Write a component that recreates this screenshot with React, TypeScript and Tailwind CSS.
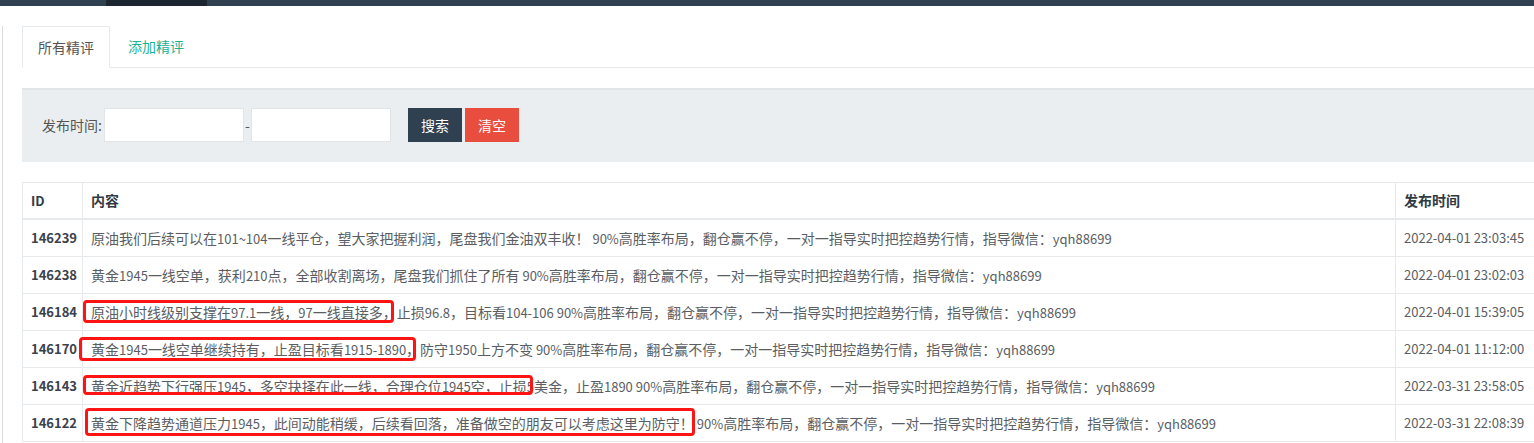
import React from 'react';

type Row = {
  id: string;
  mark?: string;
  rest: string;
  time: string;
  box?: string;
};

const rows: Row[] = [
  {
    id: '146239',
    rest: '原油我们后续可以在101~104一线平仓，望大家把握利润，尾盘我们金油双丰收！ 90%高胜率布局，翻仓赢不停，一对一指导实时把控趋势行情，指导微信：yqh88699',
    time: '2022-04-01 23:03:45',
  },
  {
    id: '146238',
    rest: '黄金1945一线空单，获利210点，全部收割离场，尾盘我们抓住了所有 90%高胜率布局，翻仓赢不停，一对一指导实时把控趋势行情，指导微信：yqh88699',
    time: '2022-04-01 23:02:03',
  },
  {
    id: '146184',
    mark: '原油小时线级别支撑在97.1一线，97一线直接多，',
    rest: '止损96.8，目标看104-106 90%高胜率布局，翻仓赢不停，一对一指导实时把控趋势行情，指导微信：yqh88699',
    time: '2022-04-01 15:39:05',
    box: '-left-[8px] right-[3px] -top-[2px] -bottom-[1px]',
  },
  {
    id: '146170',
    mark: '黄金1945一线空单继续持有，止盈目标看1915-1890，',
    rest: '防守1950上方不变 90%高胜率布局，翻仓赢不停，一对一指导实时把控趋势行情，指导微信：yqh88699',
    time: '2022-04-01 11:12:00',
    box: '-left-[12px] right-[4px] -top-[2px] -bottom-[2px]',
  },
  {
    id: '146143',
    mark: '黄金近趋势下行强压1945，多空抉择在此一线，合理仓位1945空，止损',
    rest: '5美金，止盈1890 90%高胜率布局，翻仓赢不停，一对一指导实时把控趋势行情，指导微信：yqh88699',
    time: '2022-03-31 23:58:05',
    box: '-left-[8px] -right-[6px] -top-[1px] bottom-[1px]',
  },
  {
    id: '146122',
    mark: '黄金下降趋势通道压力1945，此间动能稍缓，后续看回落，准备做空的朋友可以考虑这里为防守！',
    rest: ' 90%高胜率布局，翻仓赢不停，一对一指导实时把控趋势行情，指导微信：yqh88699',
    time: '2022-03-31 22:08:39',
    box: '-left-[6px] -right-[1px] -top-[5px] -bottom-[3px]',
  },
];

const font = { fontFamily: '"Noto Sans CJK SC", "Noto Sans", sans-serif' };

// latin runs are set a size smaller, CJK stays at 14px
const Mixed = ({ text }: { text: string }) => (
  <>
    {text.split(/([\x20-\x7e]+)/).map((part, i) =>
      /^[\x20-\x7e]+$/.test(part) ? (
        <span key={i} className="text-[13px] leading-none">
          {part}
        </span>
      ) : (
        part
      )
    )}
  </>
);

const App = () => {
  return (
    <div className="w-[1534px] h-[443px] overflow-hidden bg-white text-[14px] text-[#5a5e63]" style={font}>
      {/* top nav strip */}
      <div className="flex h-[6px] bg-[#2f4050]">
        <div className="w-[106px]" />
        <div className="w-[101px] bg-[#1c2631]" />
      </div>

      <div className="ml-[2px] border-l border-[#dcdcdc] pl-[19px] h-full">
        {/* tabs */}
        <div className="mt-[20px] flex w-[1600px] border-b border-[#e7eaec]">
          <div className="-mb-px border border-[#e7eaec] border-b-white bg-white px-[15px] py-[10px] leading-5 text-[#555]">
            所有精评
          </div>
          <div className="px-[18px] py-[10px] leading-5 text-[#1ab394]">添加精评</div>
        </div>

        {/* search panel */}
        <div className="mt-[20px] flex w-[1600px] items-center border-t-2 border-[#e2e5e7] bg-[#ebeef0] pl-[20px] pt-[18px] pb-[20px]">
          <span className="mr-[2px] text-[#555]">发布时间:</span>
          <input className="h-[34px] w-[140px] border border-[#e1e5e8] bg-white outline-none" />
          <span className="w-[7px] text-center text-[#555]">-</span>
          <input className="h-[34px] w-[140px] border border-[#e1e5e8] bg-white outline-none" />
          <button className="ml-[17px] h-[34px] w-[54px] bg-[#2f4050] text-white">搜索</button>
          <button className="ml-[3px] h-[34px] w-[54px] bg-[#e84d3d] text-white">清空</button>
        </div>

        {/* table */}
        <table className="mt-[20px] w-[1560px] table-fixed border-collapse border border-[#e7eaec]">
          <colgroup>
            <col className="w-[60px]" />
            <col className="w-[1313px]" />
            <col />
          </colgroup>
          <thead>
            <tr className="border-b-2 border-[#e7eaec]">
              <th className="border-r border-[#e7eaec] px-2 py-2 text-left text-[13px] font-bold leading-[19px] text-[#2f3a45]">ID</th>
              <th className="border-r border-[#e7eaec] px-2 py-2 text-left font-bold leading-[19px] text-[#2f3a45]">内容</th>
              <th className="px-2 py-2 text-left font-bold leading-[19px] text-[#2f3a45]">发布时间</th>
            </tr>
          </thead>
          <tbody>
            {rows.map((r) => (
              <tr key={r.id} className="border-b border-[#e7eaec]">
                <td className="border-r border-[#e7eaec] px-2 py-2 text-[13px] font-bold leading-5 text-[#3b414b]">{r.id}</td>
                <td className="whitespace-pre border-r border-[#e7eaec] px-2 py-2 leading-5">
                  {r.mark && (
                    <span className="relative">
                      <Mixed text={r.mark} />
                      <span className={`absolute rounded-[4px] border-[3px] border-[#ff1414] ${r.box}`} />
                    </span>
                  )}
                  <Mixed text={r.rest} />
                </td>
                <td className="px-2 py-2 text-[13px] leading-5">{r.time}</td>
              </tr>
            ))}
          </tbody>
        </table>
      </div>
    </div>
  );
};

export default App;
